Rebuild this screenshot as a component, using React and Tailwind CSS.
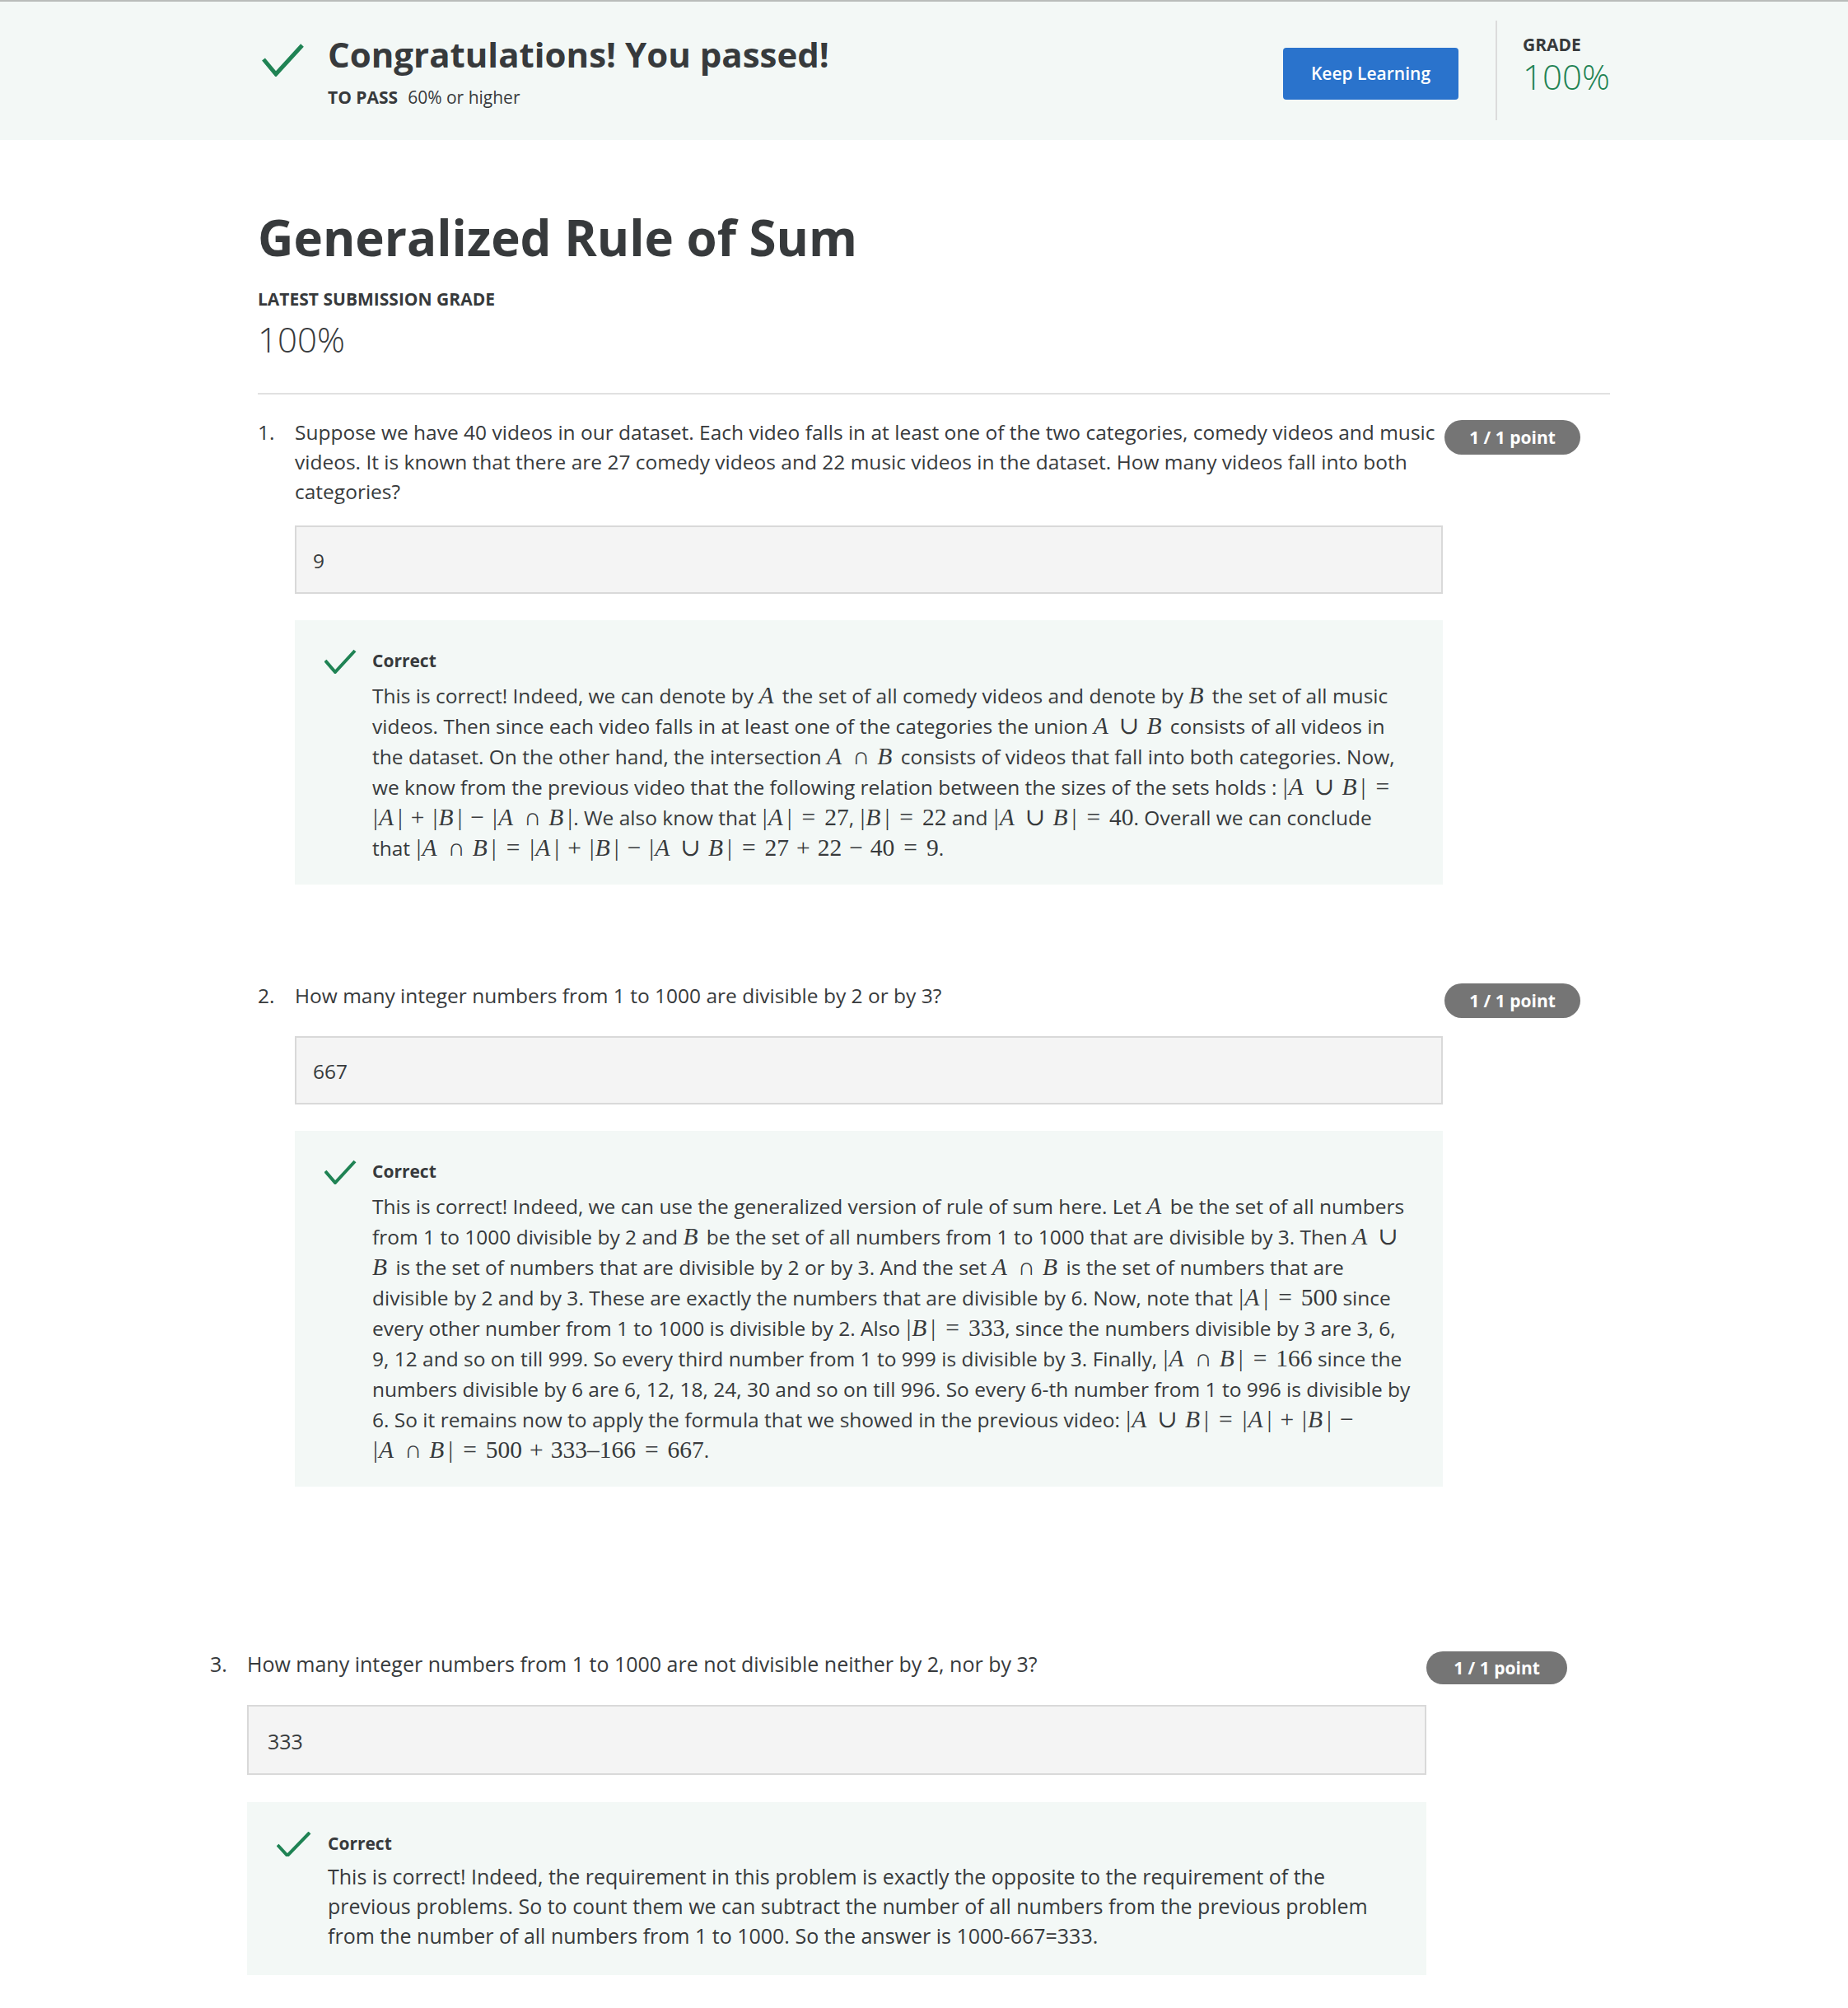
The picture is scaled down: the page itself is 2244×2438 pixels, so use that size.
import { Fragment } from 'react';

const OPS = { u: '∪', n: '∩', '+': '+', '-': '−' };

// tiny TeX-ish renderer: A/B italic, u = cup, n = cap, breaks allowed after ops
function Tex({ s }) {
  const chunks = [];
  let cur = [];
  [...s].forEach((ch, i) => {
    if (ch === 'A' || ch === 'B') {
      cur.push(<i key={i} className="pr-[4px]">{ch}</i>);
    } else if (ch === '|') {
      cur.push(<span key={i} className="px-[1px]">|</span>);
    } else if (OPS[ch]) {
      cur.push(<span key={i} className="mx-[9px]">{OPS[ch]}</span>);
      chunks.push(cur);
      cur = [];
    } else if (ch === '=') {
      cur.push(<span key={i} className="mx-[11px]">=</span>);
      chunks.push(cur);
      cur = [];
    } else {
      cur.push(<Fragment key={i}>{ch}</Fragment>);
    }
  });
  if (cur.length) chunks.push(cur);
  return chunks.map((c, i) => (
    <Fragment key={i}>
      <span className="whitespace-nowrap font-['Liberation_Serif','DejaVu_Serif',serif] text-[29.5px] leading-none">{c}</span>
      {i < chunks.length - 1 && <wbr />}
    </Fragment>
  ));
}

function Check({ width, height, points, stroke }) {
  return (
    <svg width={width} height={height} viewBox={`0 0 ${width} ${height}`} className="shrink-0">
      <polyline points={points} fill="none" stroke="#1f8354" strokeWidth={stroke} strokeLinecap="butt" strokeLinejoin="miter" />
    </svg>
  );
}

function Badge({ className }) {
  return (
    <div className={`flex items-center justify-center rounded-full bg-[#757575] text-[21px] font-bold text-white ${className}`}>
      1 / 1 point
    </div>
  );
}

function Feedback({ className, children }) {
  return (
    <div className={`flex bg-[#f3f8f6] ${className}`}>
      <Check width={40} height={30} points="1,14 13,28 37,2" stroke={4} />
      <div className="ml-[18px] flex-1">
        <div className="text-[21px] font-bold leading-[28px]">Correct</div>
        <p className="mt-[10px] text-[24.5px] leading-[37px]">{children}</p>
      </div>
    </div>
  );
}

function Answer({ className, children }) {
  return (
    <div className={`flex items-center border-2 border-[#d9d9d9] bg-[#f4f4f4] pt-1 ${className}`}>
      {children}
    </div>
  );
}

export default function App() {
  return (
    <div className="min-h-screen bg-white pb-[42px] font-['Open_Sans',sans-serif] text-[#373a3c]">
      {/* pass banner */}
      <div className="h-[170px] border-t-2 border-[#b9bcba] bg-[#f3f8f6]">
        <div className="ml-[313px] flex w-[1642px] items-start">
          <div className="flex flex-1 items-start">
            <div className="ml-[4px] mt-[51px]">
              <Check width={54} height={40} points="3,19 18,37 50,2" stroke={5} />
            </div>
            <div className="ml-[27px] mt-[38px]">
              <div className="text-[42px] font-bold leading-[52px]">Congratulations! You passed!</div>
              <div className="mt-[12px] text-[21px] leading-[28px]">
                <span className="font-bold">TO PASS</span>
                <span className="ml-[12px]">60% or higher</span>
              </div>
            </div>
          </div>
          <button className="mt-[56px] h-[63px] w-[213px] rounded-[4px] bg-[#2a73cc] text-[21px] font-semibold text-white">
            Keep Learning
          </button>
          <div className="ml-[45px] mt-[23px] h-[121px] w-[2px] bg-[#dcdcdc]" />
          <div className="ml-[31px] mt-[38px] w-[106px]">
            <div className="text-[21px] font-bold leading-[28px]">GRADE</div>
            <div className="text-[42px] font-light leading-[50px] text-[#1f8354]">100%</div>
          </div>
        </div>
      </div>

      <div className="ml-[313px] w-[1642px]">
        <h1 className="mt-[81px] text-[60px] font-bold leading-[74px]">Generalized Rule of Sum</h1>
        <div className="mt-[24px] text-[21px] font-bold leading-[28px]">LATEST SUBMISSION GRADE</div>
        <div className="mt-[10px] text-[42px] font-light leading-[50px]">100%</div>
        <div className="mt-[40px] h-[2px] bg-[#e1e1e1]" />

        {/* question 1 */}
        <div className="mt-[28px] flex items-start text-[24.5px] leading-[36px]">
          <div className="w-[45px]">1.</div>
          <div className="flex-1">
            Suppose we have 40 videos in our dataset. Each video falls in at least one of the two categories, comedy
            videos and music
            <br />
            videos. It is known that there are 27 comedy videos and 22 music videos in the dataset. How many videos
            fall into both
            <br />
            categories?
          </div>
          <div className="w-[201px] pt-[3px]">
            <Badge className="h-[42px] w-[165px]" />
          </div>
        </div>
        <div className="ml-[45px] w-[1394px]">
          <Answer className="mt-[23px] h-[83px] pl-[20px] text-[24.5px]">9</Answer>
          <Feedback className="mt-[32px] pb-[26px] pl-[36px] pr-[10px] pt-[35px]">
            This is correct! Indeed, we can denote by <Tex s="A" /> the set of all comedy videos and denote by{' '}
            <Tex s="B" /> the set of all music
            <br />
            videos. Then since each video falls in at least one of the categories the union <Tex s="AuB" /> consists
            of all videos in
            <br />
            the dataset. On the other hand, the intersection <Tex s="AnB" /> consists of videos that fall into both
            categories. Now,
            <br />
            we know from the previous video that the following relation between the sizes of the sets holds :{' '}
            <Tex s="|AuB|=" />
            <br />
            <Tex s="|A|+|B|-|AnB|" />. We also know that <Tex s="|A|=27" />, <Tex s="|B|=22" /> and{' '}
            <Tex s="|AuB|=40" />. Overall we can conclude
            <br />
            that <Tex s="|AnB|=|A|+|B|-|AuB|=27+22-40=9" />.
          </Feedback>
        </div>

        {/* question 2 */}
        <div className="mt-[117px] flex items-start text-[24.5px] leading-[36px]">
          <div className="w-[45px]">2.</div>
          <div className="flex-1">How many integer numbers from 1 to 1000 are divisible by 2 or by 3?</div>
          <div className="w-[201px] pt-[3px]">
            <Badge className="h-[42px] w-[165px]" />
          </div>
        </div>
        <div className="ml-[45px] w-[1394px]">
          <Answer className="mt-[22px] h-[83px] pl-[20px] text-[24.5px]">667</Answer>
          <Feedback className="mt-[32px] pb-[26px] pl-[36px] pr-[10px] pt-[35px]">
            This is correct! Indeed, we can use the generalized version of rule of sum here. Let <Tex s="A" /> be the
            set of all numbers
            <br />
            from 1 to 1000 divisible by 2 and <Tex s="B" /> be the set of all numbers from 1 to 1000 that are
            divisible by 3. Then <Tex s="Au" />
            <br />
            <Tex s="B" /> is the set of numbers that are divisible by 2 or by 3. And the set <Tex s="AnB" /> is the
            set of numbers that are
            <br />
            divisible by 2 and by 3. These are exactly the numbers that are divisible by 6. Now, note that{' '}
            <Tex s="|A|=500" /> since
            <br />
            every other number from 1 to 1000 is divisible by 2. Also <Tex s="|B|=333" />, since the numbers
            divisible by 3 are 3, 6,
            <br />
            9, 12 and so on till 999. So every third number from 1 to 999 is divisible by 3. Finally,{' '}
            <Tex s="|AnB|=166" /> since the
            <br />
            numbers divisible by 6 are 6, 12, 18, 24, 30 and so on till 996. So every 6-th number from 1 to 996 is
            divisible by
            <br />
            6. So it remains now to apply the formula that we showed in the previous video: <Tex s="|AuB|=|A|+|B|-" />
            <br />
            <Tex s="|AnB|=500+333–166=667" />.
          </Feedback>
        </div>

        {/* question 3 */}
        <div className="ml-[-58px]">
          <div className="mt-[197px] flex items-start text-[25px] leading-[36px]">
            <div className="w-[45px]">3.</div>
            <div className="w-[1432px]">
              How many integer numbers from 1 to 1000 are not divisible neither by 2, nor by 3?
            </div>
            <div className="pt-[3px]">
              <Badge className="h-[40px] w-[171px]" />
            </div>
          </div>
          <div className="ml-[45px] w-[1432px]">
            <Answer className="mt-[25px] h-[85px] pl-[23px] text-[25px]">333</Answer>
            <div className="mt-[33px] flex bg-[#f3f8f6] pb-[30px] pl-[36px] pr-[10px] pt-[36px]">
              <Check width={42} height={30} points="1,16 13,29 40,1" stroke={4} />
              <div className="ml-[20px] flex-1">
                <div className="text-[21px] font-bold leading-[28px]">Correct</div>
                <p className="mt-[8px] text-[25px] leading-[36px]">
                  This is correct! Indeed, the requirement in this problem is exactly the opposite to the requirement
                  of the
                  <br />
                  previous problems. So to count them we can subtract the number of all numbers from the previous
                  problem
                  <br />
                  from the number of all numbers from 1 to 1000. So the answer is 1000-667=333.
                </p>
              </div>
            </div>
          </div>
        </div>
      </div>
    </div>
  );
}
